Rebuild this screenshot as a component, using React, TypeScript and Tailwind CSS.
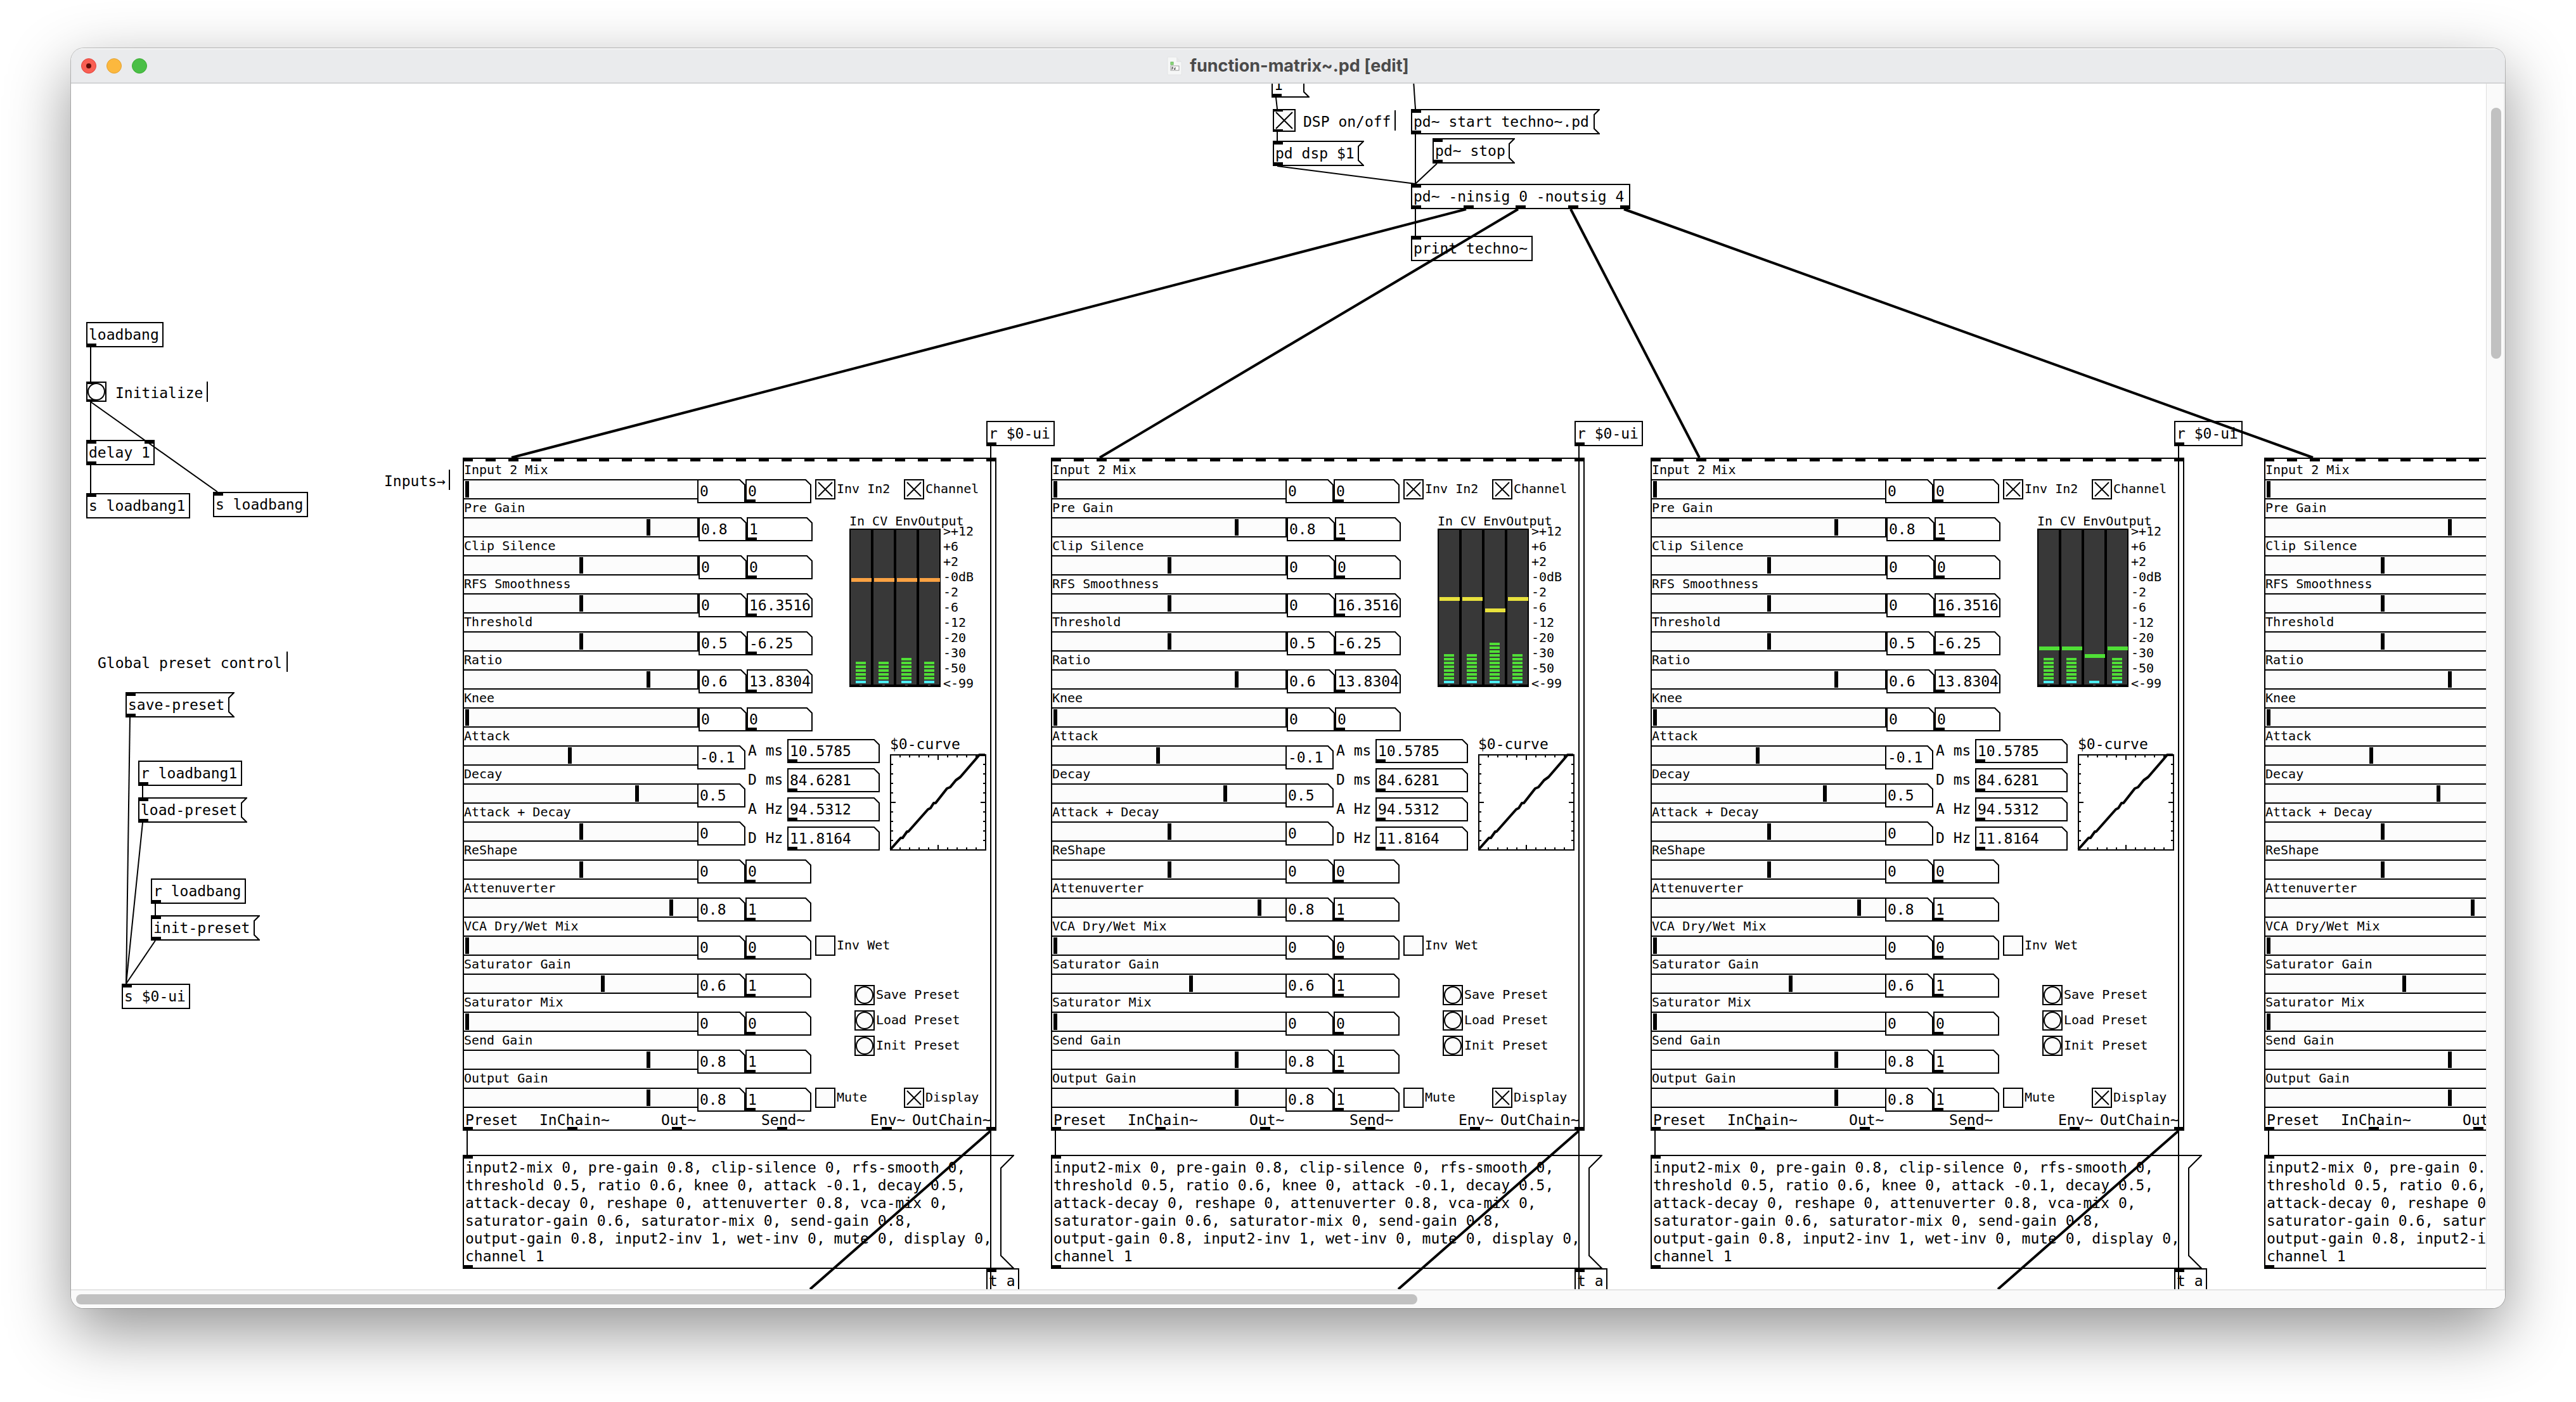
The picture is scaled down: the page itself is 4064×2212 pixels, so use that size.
import React from "react";

/* Scroll position of the patch view: patch coordinates minus this give view coordinates. */
const VIEW = { x: 112, y: 132 };
const CHAR = 14;

const at = (x: number, y: number, width?: number) => ({
  left: x - VIEW.x,
  top: y - VIEW.y,
  width,
});

type Row = {
  name: string;
  knob: number;
  value: string;
  scaled?: string;
  apart?: boolean;
};

const ROWS: Row[] = [
  { name: "Input 2 Mix", knob: 0, value: "0", scaled: "0" },
  { name: "Pre Gain", knob: 286, value: "0.8", scaled: "1", apart: true },
  { name: "Clip Silence", knob: 180, value: "0", scaled: "0", apart: true },
  { name: "RFS Smoothness", knob: 180, value: "0", scaled: "16.3516", apart: true },
  { name: "Threshold", knob: 180, value: "0.5", scaled: "-6.25", apart: true },
  { name: "Ratio", knob: 286, value: "0.6", scaled: "13.8304", apart: true },
  { name: "Knee", knob: 0, value: "0", scaled: "0", apart: true },
  { name: "Attack", knob: 162, value: "-0.1" },
  { name: "Decay", knob: 268, value: "0.5" },
  { name: "Attack + Decay", knob: 180, value: "0" },
  { name: "ReShape", knob: 180, value: "0", scaled: "0" },
  { name: "Attenuverter", knob: 322, value: "0.8", scaled: "1" },
  { name: "VCA Dry/Wet Mix", knob: 0, value: "0", scaled: "0" },
  { name: "Saturator Gain", knob: 214, value: "0.6", scaled: "1" },
  { name: "Saturator Mix", knob: 0, value: "0", scaled: "0" },
  { name: "Send Gain", knob: 286, value: "0.8", scaled: "1" },
  { name: "Output Gain", knob: 286, value: "0.8", scaled: "1" },
];

const TIMES = [
  ["A ms", "10.5785"],
  ["D ms", "84.6281"],
  ["A Hz", "94.5312"],
  ["D Hz", "11.8164"],
];

const SCALE = [">+12", "+6", "+2", "-0dB", "-2", "-6", "-12", "-20", "-30", "-50", "<-99"];

const STATE = [
  "input2-mix 0, pre-gain 0.8, clip-silence 0, rfs-smooth 0,",
  "threshold 0.5, ratio 0.6, knee 0, attack -0.1, decay 0.5,",
  "attack-decay 0, reshape 0, attenuverter 0.8, vca-mix 0,",
  "saturator-gain 0.6, saturator-mix 0, send-gain 0.8,",
  "output-gain 0.8, input2-inv 1, wet-inv 0, mute 0, display 0,",
  "channel 1",
];

type Meter = { leds: number; peak: number };
type Strip = { x: number; peakColor: string; meters: Meter[] };

const STRIPS: Strip[] = [
  {
    x: 730,
    peakColor: "bg-[#faa243]",
    meters: [
      { leds: 5, peak: 78 },
      { leds: 5, peak: 78 },
      { leds: 6, peak: 78 },
      { leds: 5, peak: 78 },
    ],
  },
  {
    x: 1658,
    peakColor: "bg-[#e9e23d]",
    meters: [
      { leds: 7, peak: 108 },
      { leds: 7, peak: 108 },
      { leds: 10, peak: 126 },
      { leds: 7, peak: 108 },
    ],
  },
  {
    x: 2604,
    peakColor: "bg-[#50df36]",
    meters: [
      { leds: 6, peak: 186 },
      { leds: 6, peak: 186 },
      { leds: 0, peak: 198 },
      { leds: 6, peak: 186 },
    ],
  },
  {
    x: 3572,
    peakColor: "bg-[#50df36]",
    meters: [
      { leds: 6, peak: 186 },
      { leds: 6, peak: 186 },
      { leds: 0, peak: 198 },
      { leds: 6, peak: 186 },
    ],
  },
];

function Ports({ count, side }: { count: number; side: "top" | "bottom" }) {
  return (
    <span
      className={
        side === "top"
          ? "absolute inset-x-0 top-0 flex justify-between"
          : "absolute inset-x-0 bottom-0 flex justify-between"
      }
    >
      {Array.from({ length: count }, (_, i) => (
        <span key={i} className="h-1.5 w-4 bg-black" />
      ))}
    </span>
  );
}

function Obj({ x, y, text, ins = 0, outs = 0 }: { x: number; y: number; text: string; ins?: number; outs?: number }) {
  return (
    <div className="absolute" style={at(x, y, text.length * CHAR + 10)}>
      <div className="border-2 border-black py-1 pl-0.5 leading-7 whitespace-pre">{text}</div>
      <Ports count={ins} side="top" />
      <Ports count={outs} side="bottom" />
    </div>
  );
}

function Msg({ x, y, lines, chars }: { x: number; y: number; lines: string[]; chars?: number }) {
  const tip = lines.length > 1 ? 20 : 8;
  const h = lines.length * 28 + 12;
  const w = (chars ?? Math.max(...lines.map((l) => l.length))) * CHAR + 10 + tip;
  const d = `M${w - 1} 1H1V${h - 1}H${w - 1}L${w - tip - 1} ${h - 1 - tip}V${1 + tip}Z`;
  return (
    <button type="button" className="absolute block p-1.5 pl-1 text-left leading-7 whitespace-pre" style={at(x, y, w)}>
      <svg className="absolute inset-0" width={w} height={h} fill="none" stroke="#000" strokeWidth="2" aria-hidden="true">
        <path d={d} />
      </svg>
      {lines.map((l) => (
        <span key={l} className="block">
          {l}
        </span>
      ))}
      <Ports count={1} side="top" />
      <Ports count={1} side="bottom" />
    </button>
  );
}

function Comment({ x, y, text }: { x: number; y: number; text: string }) {
  return (
    <p className="absolute h-8 border-r-2 border-black pt-1 leading-7 whitespace-pre" style={at(x, y, text.length * CHAR + 6)}>
      {text}
    </p>
  );
}

function NumberBox({ label, value, outlet, size }: { label: string; value: string; outlet?: boolean; size: "s" | "m" | "l" }) {
  const w = { s: 76, m: 104, l: 146 }[size];
  return (
    <span
      className={
        size === "s"
          ? "relative block h-[38px] w-[76px] shrink-0"
          : size === "m"
            ? "relative block h-[38px] w-[104px] shrink-0"
            : "relative block h-[38px] w-[146px] shrink-0"
      }
    >
      <svg className="absolute inset-0" width={w} height="38" fill="#fff" stroke="#000" strokeWidth="2" aria-hidden="true">
        <path d={`M1 1H${w - 9}L${w - 1} 9V37H1Z`} />
      </svg>
      <input
        type="text"
        aria-label={label}
        defaultValue={value}
        className="relative block h-[38px] w-full bg-transparent pl-1 leading-7 outline-none"
      />
      {outlet && <Ports count={1} side="bottom" />}
    </span>
  );
}

function Toggle({ label, checked }: { label: string; checked?: boolean }) {
  return (
    <label className="flex gap-0.5 text-[20px] leading-[30px] whitespace-pre">
      <span className="relative block size-8">
        <input
          type="checkbox"
          defaultChecked={checked}
          className="peer block size-8 appearance-none border-2 border-black bg-[#fcfcfc]"
        />
        <svg
          className="pointer-events-none absolute inset-0 hidden peer-checked:block"
          viewBox="0 0 32 32"
          stroke="#000"
          strokeWidth="2"
          aria-hidden="true"
        >
          <path d="M5 5L27 27M27 5L5 27" />
        </svg>
      </span>
      {label}
    </label>
  );
}

function BangFace() {
  return (
    <svg className="block size-8" viewBox="0 0 32 32" fill="#fcfcfc" stroke="#000" strokeWidth="2" aria-hidden="true">
      <rect x="1" y="1" width="30" height="30" />
      <circle cx="16" cy="16" r="13" />
    </svg>
  );
}

function Bang({ label }: { label: string }) {
  return (
    <button type="button" className="flex gap-0.5 text-left text-[20px] leading-[30px] whitespace-pre">
      <BangFace />
      {label}
    </button>
  );
}

function MeterBank({ strip }: { strip: Strip }) {
  return (
    <div className="flex h-[250px]">
      {strip.meters.map((m, i) => (
        <div key={i} className="relative flex w-9 flex-col justify-end border-2 border-b-4 border-black bg-[#383838] pb-0.5">
          <div className="flex flex-col items-center gap-0.5">
            {Array.from({ length: m.leds }, (_, k) => (
              <span key={k} className="h-1 w-4 bg-[#50df36]" />
            ))}
            <span className="h-1 w-4 bg-[#4cedf1]" />
          </div>
          <span className={`absolute left-px h-1.5 w-8 ${strip.peakColor}`} style={{ top: m.peak - 2 }} />
          <span className="absolute -bottom-0.5 left-3.5 h-0.5 w-1 bg-[#383838]" />
        </div>
      ))}
    </div>
  );
}

function Curve() {
  const steps = [1, 2, 3, 4, 5, 6, 7, 8, 9];
  return (
    <svg className="block overflow-visible" width="152" height="152" fill="none" stroke="#000" strokeWidth="2" aria-hidden="true">
      <rect x="1" y="1" width="150" height="150" />
      {steps.map((s) => {
        const p = s * 15 + 1;
        const t = s === 5 ? 8 : 4;
        return <path key={s} d={`M${p} 1v${t}M${p} 151v-${t}M1 ${p}h${t}M151 ${p}h-${t}`} />;
      })}
      <path
        d="M1 150L17 132H20L27 122H29L60 87L64 85L69 77H72L90 54L95 52L104 41L111 36L136 7L141 1H150"
        strokeWidth="4"
        strokeLinejoin="round"
      />
    </svg>
  );
}

function FunctionStrip({ strip, index }: { strip: Strip; index: number }) {
  return (
    <section
      aria-label={`Function ${index + 1}`}
      className="absolute h-[1062px] w-[842px] border-2 border-black"
      style={at(strip.x, 722)}
    >
      <div className="-mx-0.5 pt-1">
        {ROWS.map((r) => {
          const id = `f${index}-${r.name}`;
          return (
            <div key={r.name}>
              <label htmlFor={id} className="block h-7 pl-0.5 text-[20px] leading-[26px]">
                {r.name}
              </label>
              <div className="flex h-8 items-start">
                <input
                  id={id}
                  type="range"
                  min={0}
                  max={358}
                  defaultValue={r.knob}
                  className="block h-8 w-[372px] shrink-0 appearance-none border-2 border-black bg-[#fcfcfc] px-0.5 [&::-webkit-slider-thumb]:h-[26px] [&::-webkit-slider-thumb]:w-1.5 [&::-webkit-slider-thumb]:appearance-none [&::-webkit-slider-thumb]:bg-black"
                />
                <div className={r.apart ? "flex" : "-ml-0.5 flex"}>
                  <NumberBox size="s" label={r.name} value={r.value} />
                  {r.scaled !== undefined && <NumberBox size="m" outlet label={`${r.name} scaled`} value={r.scaled} />}
                </div>
              </div>
            </div>
          );
        })}
      </div>

      <div className="absolute top-8 left-[554px] grid grid-cols-[140px_auto]">
        <Toggle label="Inv In2" checked />
        <Toggle label="Channel" checked />
      </div>

      <div className="absolute top-[84px] left-[608px] text-[20px] whitespace-pre">
        <p className="h-[26px] leading-7">In CV EnvOutput</p>
        <div className="flex gap-1">
          <MeterBank strip={strip} />
          <ul className="-mt-2 leading-6">
            {SCALE.map((s) => (
              <li key={s}>{s}</li>
            ))}
          </ul>
        </div>
      </div>

      <div className="absolute top-[442px] left-[448px] flex flex-col gap-2">
        {TIMES.map(([k, v]) => (
          <label key={k} className="flex">
            <span className="w-[62px] pt-1 leading-7">{k}</span>
            <NumberBox size="l" outlet label={k} value={v} />
          </label>
        ))}
      </div>

      <figure className="absolute top-[436px] left-[672px]">
        <figcaption className="h-[30px] leading-7">$0-curve</figcaption>
        <Curve />
      </figure>

      <div className="absolute top-[752px] left-[554px]">
        <Toggle label="Inv Wet" />
      </div>
      <div className="absolute top-[830px] left-[616px] flex flex-col gap-2">
        <Bang label="Save Preset" />
        <Bang label="Load Preset" />
        <Bang label="Init Preset" />
      </div>
      <div className="absolute top-[992px] left-[554px] grid grid-cols-[140px_auto]">
        <Toggle label="Mute" />
        <Toggle label="Display" checked />
      </div>

      <div className="absolute top-[1029px] left-0.5 grid grid-cols-[117px_192px_158px_172px_66px_auto] leading-7">
        {["Preset", "InChain~", "Out~", "Send~", "Env~", "OutChain~"].map((t) => (
          <span key={t}>{t}</span>
        ))}
      </div>

      <div className="pointer-events-none absolute -inset-0.5">
        <Ports count={24} side="top" />
        <Ports count={6} side="bottom" />
      </div>
    </section>
  );
}

const CORDS: number[][] = [
  [143, 548, 143, 602],
  [143, 634, 143, 694],
  [143, 634, 343, 776],
  [143, 734, 143, 778],
  [205, 1132, 199, 1552],
  [225, 1240, 225, 1258],
  [225, 1298, 199, 1552],
  [245, 1426, 245, 1444],
  [245, 1484, 199, 1552],
  [2013, 154, 2015, 172],
  [2015, 208, 2015, 222],
  [2015, 262, 2233, 290],
  [2229, 112, 2233, 172],
  [2233, 212, 2233, 290],
  [2267, 258, 2233, 290],
  [2233, 330, 2233, 372],
];

function Cords() {
  return (
    <svg className="pointer-events-none absolute inset-0 size-full" fill="none" stroke="#000" aria-hidden="true">
      <g transform={`translate(${-VIEW.x} ${-VIEW.y})`}>
        {CORDS.map(([a, b, c, d]) => (
          <path key={`${a},${b},${c}`} d={`M${a} ${b}L${c} ${d}`} strokeWidth="2" />
        ))}
        {STRIPS.map(({ x }, i) => (
          <g key={x}>
            <path d={`M${[2313, 2395, 2478, 2562][i]} 330L${x + 77} 722`} strokeWidth="4" />
            <path d={`M${x + 7} 1784V1822M${x + 833} 704V2044`} strokeWidth="2" />
            <path d={`M${x + 833} 1784L${x + 548} 2034`} strokeWidth="4" />
          </g>
        ))}
      </g>
    </svg>
  );
}

function Patch() {
  return (
    <main className="relative min-w-0 flex-1 overflow-hidden bg-white font-['DejaVu_Sans_Mono',monospace] text-[23px] text-black">
      <Obj x={136} y={508} text="loadbang" outs={1} />
      <button type="button" aria-label="Initialize" className="absolute block" style={at(136, 602)}>
        <BangFace />
        <span className="absolute top-0 left-0 h-1 w-4 bg-black" />
        <span className="absolute bottom-0 left-0 h-1 w-4 bg-black" />
      </button>
      <Comment x={182} y={602} text="Initialize" />
      <Obj x={136} y={694} text="delay 1" ins={2} outs={1} />
      <Obj x={136} y={778} text="s loadbang1" ins={1} />
      <Obj x={336} y={776} text="s loadbang" ins={1} />
      <Comment x={606} y={741} text="Inputs→" />

      <Comment x={154} y={1028} text="Global preset control" />
      <Msg x={198} y={1092} lines={["save-preset"]} />
      <Obj x={218} y={1200} text="r loadbang1" outs={1} />
      <Msg x={218} y={1258} lines={["load-preset"]} />
      <Obj x={238} y={1386} text="r loadbang" outs={1} />
      <Msg x={238} y={1444} lines={["init-preset"]} />
      <Obj x={192} y={1552} text="s $0-ui" ins={1} />

      <Msg x={2006} y={114} lines={["1"]} chars={3} />
      <label className="absolute block" style={at(2008, 172)}>
        <input
          type="checkbox"
          aria-label="DSP on/off"
          defaultChecked
          className="peer block size-9 appearance-none border-2 border-black bg-[#fcfcfc]"
        />
        <svg
          className="pointer-events-none absolute inset-0 hidden peer-checked:block"
          viewBox="0 0 36 36"
          stroke="#000"
          strokeWidth="2"
          aria-hidden="true"
        >
          <path d="M5 5L31 31M31 5L5 31" />
        </svg>
        <span className="absolute top-0 left-0 h-1 w-4 bg-black" />
        <span className="absolute bottom-0 left-0 h-1 w-4 bg-black" />
      </label>
      <Comment x={2056} y={174} text="DSP on/off" />
      <Msg x={2008} y={222} lines={["pd dsp $1"]} />
      <Msg x={2226} y={172} lines={["pd~ start techno~.pd"]} />
      <Msg x={2260} y={218} lines={["pd~ stop"]} />
      <Obj x={2226} y={290} text="pd~ -ninsig 0 -noutsig 4" ins={1} outs={5} />
      <Obj x={2226} y={372} text="print techno~" ins={1} />

      {STRIPS.map((strip, i) => (
        <React.Fragment key={strip.x}>
          <Obj x={strip.x + 826} y={664} text="r $0-ui" outs={1} />
          <FunctionStrip strip={strip} index={i} />
          <Msg x={strip.x} y={1822} lines={STATE} />
          <Obj x={strip.x + 826} y={2001} text="t a" ins={1} />
        </React.Fragment>
      ))}

      <Cords />
    </main>
  );
}

function TitleBar() {
  return (
    <header className="relative flex h-14 shrink-0 items-center border-t-2 border-b-2 border-t-[#f4f5f5] border-b-[#d3d4d5] bg-[#eaebed] px-4">
      <div className="flex gap-4">
        <button
          type="button"
          aria-label="Close"
          className="flex size-6 items-center justify-center rounded-full border border-[#e0443e] bg-[#f95f53]"
        >
          <span className="size-2 rounded-full bg-[#5f0d08]" />
        </button>
        <button type="button" aria-label="Minimize" className="size-6 rounded-full border border-[#e1a032] bg-[#fcb83e]" />
        <button type="button" aria-label="Zoom" className="size-6 rounded-full border border-[#3cab34] bg-[#4abf46]" />
      </div>
      <div className="absolute inset-0 m-auto flex w-max items-center gap-3">
        <svg width="24" height="30" viewBox="0 0 24 30" aria-hidden="true">
          <path d="M1 1H15L23 9V29H1Z" fill="#f6f7f7" stroke="#e4e5e6" />
          <path d="M15 1V9H23Z" fill="#e6e7e8" />
          <rect x="6" y="9" width="4" height="4" fill="#8fe07f" stroke="#5fae52" />
          <rect x="6" y="15" width="13" height="7" fill="#fff" stroke="#9a9a9a" />
          <path d="M8 21V17H9.500V19H8M13 17V20.500H11.500V19H13" fill="none" stroke="#555" />
        </svg>
        <h1 className="font-['Inter',sans-serif] text-[27px] leading-8 font-bold text-[#4a4a4a]">function-matrix~.pd [edit]</h1>
      </div>
    </header>
  );
}

export default function App() {
  return (
    <div className="flex h-screen flex-col bg-white px-28 pt-19 pb-37">
      <div className="flex min-h-0 flex-1 flex-col overflow-hidden rounded-[20px] bg-white shadow-[0_36px_100px_rgba(0,0,0,0.43),0_0_0_1px_rgba(0,0,0,0.22)]">
        <TitleBar />
        <div className="flex min-h-0 flex-1">
          <Patch />
          <div
            role="scrollbar"
            aria-orientation="vertical"
            aria-valuenow={10}
            className="w-[30px] shrink-0 border-r-2 border-l border-r-[#ececec] border-l-[#dfdfdf] bg-[#fafafa] pt-[38px] pl-[7px]"
          >
            <div className="h-[396px] w-4 rounded-full bg-[#c1c1c1]" />
          </div>
        </div>
        <div
          role="scrollbar"
          aria-orientation="horizontal"
          aria-valuenow={0}
          className="h-[30px] shrink-0 border-t-2 border-[#e4e4e4] bg-[#fafafa] px-2 pt-1.5"
        >
          <div className="h-4 w-[2116px] rounded-full bg-[#c1c1c1]" />
        </div>
      </div>
    </div>
  );
}
